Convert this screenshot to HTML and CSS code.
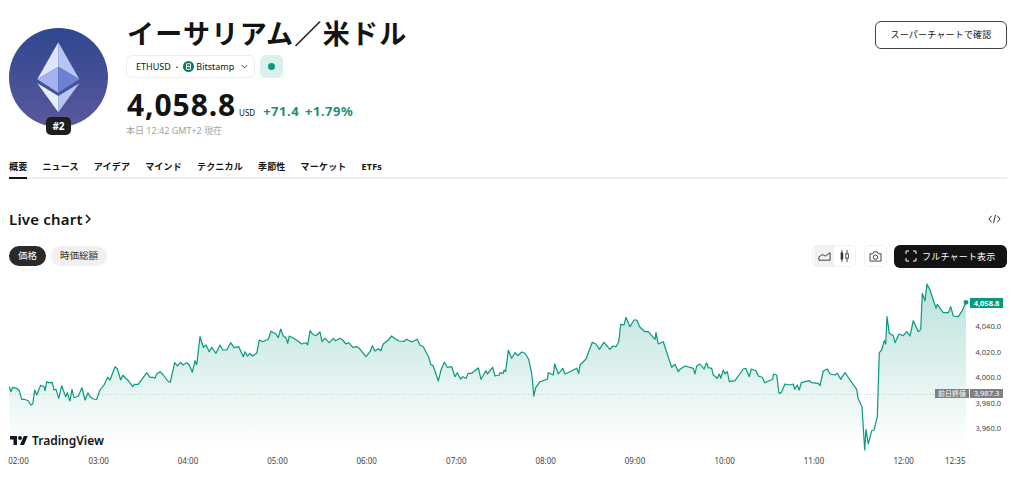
FILE: index.html
```html
<!DOCTYPE html>
<html lang="ja">
<head>
<meta charset="utf-8">
<title>イーサリアム／米ドル</title>
<link rel="stylesheet" href="styles.css">
</head>
<body>
	<div id="page">

		<div class="head">
			<div class="coin">
				<svg class="coin-img" viewBox="0 0 99 99">
					<defs>
						<linearGradient id="coin-bg" x1="0" y1="0" x2="0" y2="1">
							<stop offset="0" stop-color="#2f4790"/>
							<stop offset="1" stop-color="#5a589b"/>
						</linearGradient>
					</defs>
					<circle cx="49.5" cy="49.5" r="49.5" fill="url(#coin-bg)"/>
					<polygon points="49.3,14.3 28.3,51.3 49.3,38.7" fill="#dfe6fb"/>
					<polygon points="49.3,14.3 70.3,51.3 49.3,38.7" fill="#b7c5f3"/>
					<polygon points="28.3,51.3 49.3,38.7 49.3,64.7" fill="#a3b3ef"/>
					<polygon points="70.3,51.3 49.3,38.7 49.3,64.7" fill="#6b81d6"/>
					<polygon points="28.3,55.3 49.3,68 49.3,84.3" fill="#e8edfc"/>
					<polygon points="70.3,55.3 49.3,68 49.3,84.3" fill="#b7c5f3"/>
				</svg>
				<span class="rank">#2</span>
			</div>
			<div class="info">
				<h1 class="title">イーサリアム／米ドル</h1>
				<div class="ticker-row">
					<div class="ticker">
						<span>ETHUSD</span>
						<span class="ticker-sep">·</span>
						<svg class="exch-icon" viewBox="0 0 12 12">
							<circle cx="6" cy="6" r="6" fill="#0a7a63"/>
							<path d="M3.8 3h4.4v6H3.8zM3.8 6h4.4" fill="none" stroke="#fff" stroke-width="1"/>
						</svg>
						<span>Bitstamp</span>
						<svg class="caret" viewBox="0 0 8 5"><path d="M1 1l3 3 3-3" fill="none" stroke="#222" stroke-width="1"/></svg>
					</div>
					<div class="status"><i></i></div>
				</div>
				<div class="price-row">
					<span class="price">4,058.8</span>
					<span class="cur">USD</span>
					<span class="chg">+71.4</span>
					<span class="chg">+1.79%</span>
				</div>
				<div class="stamp">本日 12:42 GMT+2 現在</div>
			</div>
			<a class="super-btn">スーパーチャートで確認</a>
		</div>

		<div class="tabs">
			<a class="tab on">概要</a>
			<a class="tab">ニュース</a>
			<a class="tab">アイデア</a>
			<a class="tab">マインド</a>
			<a class="tab">テクニカル</a>
			<a class="tab">季節性</a>
			<a class="tab">マーケット</a>
			<a class="tab">ETFs</a>
		</div>

		<div class="live-head">
			<h2 class="live-title">Live chart<svg viewBox="0 0 6 10"><path d="M1 1l4 4-4 4" fill="none" stroke="#111" stroke-width="1.5"/></svg></h2>
			<svg class="code-icon" viewBox="0 0 14 10"><path d="M4 1.5L1 5l3 3.5M10 1.5L13 5l-3 3.5M8 .5L6 9.5" fill="none" stroke="#222" stroke-width="1"/></svg>
		</div>

		<div class="tools">
			<a class="pill on">価格</a>
			<a class="pill">時価総額</a>
			<div class="spacer"></div>
			<div class="tool-group">
				<a class="tool on">
					<svg viewBox="0 0 14 10"><path d="M1 9.5V6l3.5-2.5L8 5l5-3.5v8z" fill="none" stroke="#333" stroke-width="1"/></svg>
				</a>
				<a class="tool">
					<svg viewBox="0 0 12 14"><path d="M3 0v14M9 0v14" stroke="#333" stroke-width="1"/><rect x="1.5" y="3" width="3" height="8" fill="#333"/><rect x="7.5" y="4.5" width="3" height="5" fill="#fff" stroke="#333"/></svg>
				</a>
			</div>
			<a class="tool-box">
				<svg viewBox="0 0 14 12"><path d="M1 3h3l1-2h4l1 2h3v8H1z" fill="none" stroke="#333" stroke-width="1"/><circle cx="7" cy="6.8" r="2.4" fill="none" stroke="#333"/></svg>
			</a>
			<a class="full-btn">
				<svg viewBox="0 0 12 12"><path d="M1 4V1h3M8 1h3v3M11 8v3H8M4 11H1V8" fill="none" stroke="#fff" stroke-width="1"/></svg>
				フルチャート表示
			</a>
		</div>

		<div class="chart" id="chart">
			<svg class="plot" viewBox="9 280 1015 197">
				<defs>
					<linearGradient id="area-bg" gradientUnits="userSpaceOnUse" x1="0" y1="285" x2="0" y2="447">
						<stop offset="0" stop-color="#089981" stop-opacity="0.28"/>
						<stop offset="1" stop-color="#089981" stop-opacity="0"/>
					</linearGradient>
				</defs>
				<polygon id="area" fill="url(#area-bg)"/>
				<line x1="9" y1="394.5" x2="935" y2="394.5" stroke="#c4cfcc" stroke-dasharray="1 2"/>
				<polyline id="line" fill="none" stroke="#089981" stroke-width="1.2" stroke-linejoin="round"/>
				<circle cx="966" cy="302.3" r="2.4" fill="#089981"/>
			</svg>
			<div class="tv-logo">
				<svg viewBox="0 0 36 28"><path d="M14 22H7V11H0V4h14v18zM28 22h-8l7.5-18h8L28 22z" fill="#131722"/><circle cx="20" cy="8" r="4" fill="#131722"/></svg>
				<span>TradingView</span>
			</div>
			<span class="tag tag-last">4,058.8</span>
			<span class="tag tag-prev">前日終値</span>
			<span class="tag tag-prev-val">3,987.3</span>
		</div>

	</div>
	<script src="script.js"></script>
</body>
</html>
```

FILE: styles.css
```css
html,body{
	height: 100%;
	margin: 0px;
	padding: 0px;
	overflow: hidden;
}

body{
	background-color: #FFF;
	color: #131313;
	font-family: "Noto Sans", "Noto Sans CJK JP", sans-serif;
}

#page{
	padding-left: 9px;
	width: 998px;
}

a{
	cursor: pointer;
}

svg{
	display: block;
}

.head{
	display: flex;
	align-items: flex-start;
	height: 144px;
}

.coin{
	position: relative;
	width: 99px;
	height: 99px;
	margin-top: 28px;
	margin-right: 18px;
}

.coin-img{
	width: 99px;
	height: 99px;
}

.rank{
	position: absolute;
	left: 37px;
	top: 89px;
	width: 25px;
	height: 18px;
	line-height: 18px;
	border-radius: 5px;
	background-color: #1e1e1e;
	color: #FFF;
	font-size: 10px;
	font-weight: 700;
	text-align: center;
}

.info{
	flex: 1;
}

.title{
	margin: 14px 0px 0px 1px;
	height: 37px;
	line-height: 37px;
	font-family: "Noto Sans CJK JP", sans-serif;
	font-size: 27px;
	font-weight: 700;
	letter-spacing: 1.3px;
	white-space: nowrap;
}

.ticker-row{
	display: flex;
	gap: 5px;
	margin-top: 4px;
}

.ticker{
	display: flex;
	align-items: center;
	box-sizing: border-box;
	width: 129px;
	height: 23px;
	padding-left: 9px;
	border: 1px solid #EEE;
	border-radius: 6px;
	font-size: 9px;
}

.ticker-sep{
	margin: 0px 5px;
	font-weight: 700;
}

.exch-icon{
	width: 11px;
	height: 11px;
	margin-right: 2px;
}

.caret{
	width: 7px;
	height: 5px;
	margin-left: 7px;
}

.status{
	display: flex;
	align-items: center;
	justify-content: center;
	width: 23px;
	height: 23px;
	border-radius: 6px;
	background-color: #DAF0EC;
}

.status i{
	width: 7px;
	height: 7px;
	border-radius: 50%;
	background-color: #089981;
}

.price-row{
	display: flex;
	align-items: baseline;
	height: 38px;
	line-height: 38px;
	margin-top: 8px;
	margin-left: 1px;
}

.price{
	font-size: 30px;
	font-weight: 700;
	letter-spacing: 0.9px;
}

.cur{
	margin: 0px 8px 0px 3px;
	font-size: 8px;
}

.chg{
	margin-right: 6px;
	color: #1A8F78;
	font-size: 13px;
	font-weight: 700;
	letter-spacing: 0.5px;
}

.stamp{
	height: 14px;
	line-height: 14px;
	margin-left: 0px;
	color: #A3A3A3;
	font-size: 9px;
}

.super-btn{
	box-sizing: border-box;
	width: 132px;
	height: 28px;
	margin-top: 21px;
	line-height: 26px;
	border: 1px solid #444;
	border-radius: 6px;
	font-size: 9px;
	text-align: center;
	letter-spacing: 0.2px;
}

.tabs{
	display: flex;
	gap: 15px;
	height: 35px;
	border-bottom: 2px solid #EEE;
	box-sizing: border-box;
}

.tab{
	height: 35px;
	box-sizing: border-box;
	padding-top: 16px;
	line-height: 13px;
	font-size: 9px;
	font-weight: 700;
	letter-spacing: 0.2px;
}

.tab.on{
	border-bottom: 2px solid #131313;
}

.live-head{
	display: flex;
	align-items: center;
	justify-content: space-between;
	height: 24px;
	margin-top: 28px;
}

.live-title{
	display: flex;
	align-items: center;
	gap: 2px;
	margin: 0px;
	font-size: 15px;
	font-weight: 600;
	letter-spacing: 0.2px;
}

.live-title svg{
	width: 6px;
	height: 10px;
}

.code-icon{
	width: 13px;
	height: 10px;
	margin-right: 6px;
}

.tools{
	display: flex;
	align-items: center;
	height: 24px;
	margin-top: 13px;
}

.pill{
	height: 20px;
	line-height: 20px;
	margin-right: 5px;
	padding: 0px 9px;
	border-radius: 10px;
	background-color: #F0F0F0;
	color: #333;
	font-size: 9.5px;
}

.pill.on{
	background-color: #2A2A2A;
	color: #FFF;
}

.spacer{
	flex: 1;
}

.tool-group{
	display: flex;
	height: 22px;
	margin-right: 8px;
	padding: 0px 1px;
	border: 1px solid #F2F2F2;
	border-radius: 5px;
	box-sizing: border-box;
}

.tool{
	display: flex;
	align-items: center;
	justify-content: center;
	width: 20px;
}

.tool.on{
	background-color: #F2F2F2;
}

.tool svg{
	width: 13px;
	height: 12px;
}

.tool-box{
	display: flex;
	align-items: center;
	justify-content: center;
	box-sizing: border-box;
	width: 23px;
	height: 22px;
	margin-right: 7px;
	border: 1px solid #F2F2F2;
	border-radius: 5px;
}

.tool-box svg{
	width: 13px;
	height: 11px;
}

.full-btn{
	display: flex;
	align-items: center;
	gap: 5px;
	box-sizing: border-box;
	width: 113px;
	height: 23px;
	padding-left: 11px;
	border-radius: 6px;
	background-color: #131313;
	color: #FFF;
	font-size: 9px;
	letter-spacing: 0.2px;
	white-space: nowrap;
}

.full-btn svg{
	width: 12px;
	height: 12px;
}

.chart{
	position: relative;
	width: 1015px;
	height: 197px;
	margin-top: 12px;
}

.plot{
	width: 1015px;
	height: 197px;
}

.tv-logo{
	position: absolute;
	left: 1px;
	top: 152px;
	display: flex;
	align-items: center;
	gap: 4px;
	font-size: 12px;
	font-weight: 600;
	color: #131722;
}

.tv-logo svg{
	width: 18px;
	height: 14px;
}

.axis-x, .axis-y{
	position: absolute;
	height: 8px;
	color: #444;
	line-height: 8px;
}

.axis-x{
	font-size: 8px;
	transform: translateX(-50%);
}

.axis-y{
	font-size: 7.5px;
}

.tag{
	position: absolute;
	height: 9px;
	line-height: 9px;
	color: #FFF;
	font-size: 7.5px;
	text-align: center;
}

.tag-last{
	left: 961px;
	top: 18px;
	width: 33px;
	height: 10px;
	line-height: 10px;
	background-color: #089981;
	font-weight: 700;
}

.tag-prev{
	left: 926px;
	top: 109px;
	width: 34px;
	background-color: #808080;
	font-size: 7px;
}

.tag-prev-val{
	left: 961px;
	top: 109px;
	width: 33px;
	background-color: #808080;
}
```

FILE: script.js
```js
// price line traced as page coordinates, x y x y ...
var pts = [
	9.3,386.7, 11,391.7, 12.7,387.3, 16.7,388.3, 19.3,390.7, 21.7,399.3, 24,399.3, 28.3,400.7, 30.7,405, 32.7,404,
	34.7,390, 36.7,395, 40.7,385.3, 44,386.7, 45,390.7, 46.7,381.7, 48.7,382.7, 52.3,382.3, 54,390, 56,389.3,
	58.7,398.3, 61.7,385.7, 65.7,396.7, 67.3,392.7, 70,401, 72,389.3, 74,397.7, 78.3,396, 82,387.7, 85,400,
	88,392.7, 90,396.7, 93.3,399, 96.7,399.3, 100,390, 104,385, 107.7,377.3, 110,380, 115,366.7, 117.3,368.7,
	120.7,380, 122.7,375.3, 128.3,380.7, 132.7,386.7, 134.3,384.3, 138.3,384.3, 146.7,372.7, 150,377.3, 153.3,377.3, 155,378.3,
	156.7,374, 160,371.7, 163.3,375, 167.7,381, 170.3,382.3, 174.7,362.7, 177.3,366, 180.7,362.3, 182.7,365, 186.7,362.7,
	189.3,365, 192.3,372.3, 195,360.7, 196.7,364.7, 200,336.7, 203.3,347.3, 206,345, 209.3,351.7, 211.7,347.3, 216,353.3,
	220,345, 222.7,350, 226.7,350, 230.7,342.7, 234,347.7, 238.7,346.7, 243.3,356.7, 245,351.7, 247.3,356, 250,353.3,
	252.3,356, 256.7,353.3, 259.3,340, 262.7,341.7, 268.3,339.3, 271,331.3, 276,334, 278.3,337.7, 280.7,329, 283.3,336,
	286,338, 287.7,343.3, 289.3,336, 295,339, 301.7,344, 306,342.7, 307.7,345, 310,330.7, 312.7,334.3, 316,335.7,
	320,332, 322,341.7, 325,338.3, 329.3,342.7, 333.3,338.3, 335.3,340.7, 340,338.3, 342.7,340, 346,344, 348.7,342.7,
	352.7,347.3, 356.7,346.7, 359.3,348.3, 366,356.7, 370,351.7, 372.3,345.7, 375,351, 378.3,348.7, 380.7,350.7, 383.3,344,
	388.3,340, 391.7,336, 395,338.7, 399.3,341, 404,341.3, 406.7,339.3, 411.7,342, 417.3,339.3, 420,345.3, 423.3,346.7,
	428.7,357.3, 431,365, 432.7,365, 435,371, 438.3,381, 441,370, 444.3,362.3, 447.3,367.3, 451.7,366.7, 455,376.7,
	457.3,372.7, 460.7,379.3, 462.7,376.7, 466,378.3, 468.3,373.3, 471.7,373.3, 478.3,368, 481,379.3, 486,370.7, 487.3,374,
	492.7,367.3, 495,376, 499.3,375, 500,372.7, 503.3,373.3, 504,370, 505.7,371.7, 508.3,350.3, 511.7,358.3, 515,352.7,
	517.7,355.7, 521.7,352, 525,353.3, 528.7,359.3, 531.7,373.3, 532.7,383.3, 533.7,396, 535.7,387.7, 540,381.7, 547.3,379.3,
	548.3,372.7, 553.3,375, 554.7,364, 558.3,374, 562.7,368.3, 565,374, 570,371.7, 576.7,368.3, 578.7,373.3, 580,365,
	586,359, 592.3,342.3, 596,344, 599.3,349.3, 604,342.3, 610,349.3, 612.7,346, 616,346.7, 618.7,341.7, 620.7,324.3,
	624,325, 626,317.3, 630,326.7, 634,320, 636.7,320, 640,327.3, 645,331.7, 648.3,331.7, 655,339.3, 656,332.7,
	658.3,344, 663.3,341.7, 668.3,357.3, 671.7,367.3, 675,364.3, 678.3,371.7, 680,369.3, 685,366, 693.3,368.3, 695,374,
	696.7,366, 700,364, 704,369, 706.7,362.7, 708.3,367.7, 711.7,368.3, 713.3,375, 717.3,378.3, 719.3,374, 720.7,378.3,
	723.3,370, 725,374, 727.3,371.7, 729.3,381.7, 735,380.7, 743.3,369, 745.7,368.3, 749.3,376.7, 751.3,369, 756,370.7,
	758.3,376, 762.3,377.3, 764.7,382.7, 772.7,379.3, 773.3,374, 776.7,375, 779,393.3, 781.3,392.7, 785,384, 790,385,
	793.3,384, 794.7,389.3, 797.3,385, 799.3,390, 801.3,382.7, 809.3,380.7, 811.7,382.7, 818.3,383.3, 820,385.7, 823.3,371,
	827.3,369, 830,374, 835,375, 837.3,373.3, 840.7,379.3, 845,372.7, 850,380, 856.7,389.3, 858,398.3, 862,406.7,
	864.7,450, 866,429.3, 868.3,444, 871.7,430.7, 874,430, 877.3,416.7, 879.3,352.7, 881.7,350, 884.3,340.7, 885.7,344,
	887,316.7, 889.3,333.3, 893.3,335.7, 895,342.7, 899,334, 903.3,335.7, 906.7,331.7, 910,336, 913.3,320.7, 918.3,331.7,
	920.7,329.3, 922.3,293.3, 925,300.7, 927,284, 930,290, 932.7,298.3, 936,308.3, 937.3,304.3, 943.3,312.7, 948.3,312.7,
	950.7,306.7, 953.3,316, 958.3,316.7, 961.7,311.7, 966,302.3
];

var linePts = [];
for(var i = 0; i < pts.length; i += 2){
	linePts.push(pts[i] + "," + pts[i + 1]);
}

document.getElementById("line").setAttribute("points", linePts.join(" "));
document.getElementById("area").setAttribute("points", "9.3,447 " + linePts.join(" ") + " 966,447");

// axis labels, x and y are page coordinates of the label centre
var chart = document.getElementById("chart");

function addLabel(cls, text, left, top){
	var el = document.createElement("span");
	el.className = cls;
	el.textContent = text;
	el.style.left = (left - 9) + "px";
	el.style.top = (top - 280 - 4) + "px";
	chart.appendChild(el);
}

var times = [
	["02:00", 18.5], ["03:00", 98.7], ["04:00", 188], ["05:00", 277.5], ["06:00", 366.7], ["07:00", 456.3],
	["08:00", 545.7], ["09:00", 635], ["10:00", 724.7], ["11:00", 814], ["12:00", 903.7], ["12:35", 955.3]
];
times.forEach(function(t){
	addLabel("axis-x", t[0], t[1], 461);
});

var prices = [["4,040.0", 326], ["4,020.0", 351.5], ["4,000.0", 377], ["3,980.0", 402.5], ["3,960.0", 427.5]];
prices.forEach(function(p){
	addLabel("axis-y", p[0], 975.5, p[1]);
});
```
